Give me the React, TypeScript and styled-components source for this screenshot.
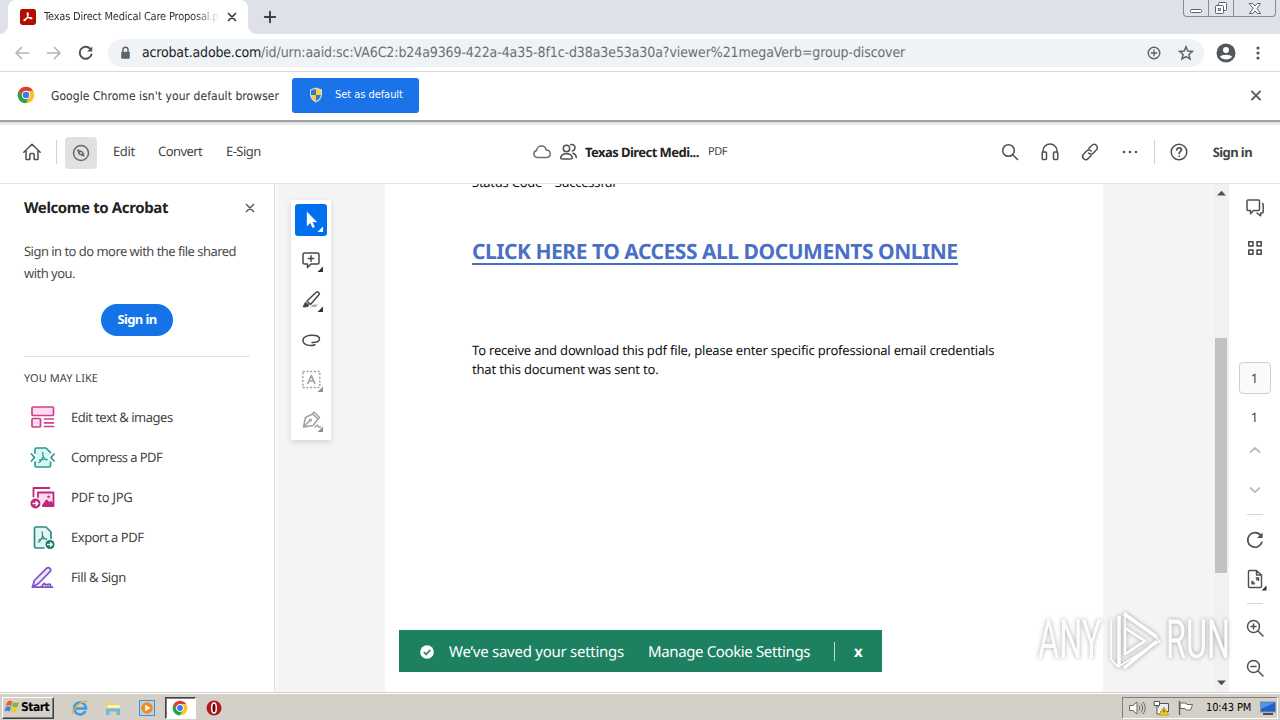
import React from 'react';
import styled, { createGlobalStyle, css } from 'styled-components';

const ui = '"DejaVu Sans Condensed", "DejaVu Sans", sans-serif';
const adobe = '"Noto Sans", "Open Sans", sans-serif';

const Global = createGlobalStyle`
  * { box-sizing: border-box; }
  html, body { margin: 0; overflow: hidden; background: #fff; }
  body { font-family: ${adobe}; color: #2c2c2c; text-rendering: geometricPrecision; }
  svg { display: block; flex: none; }
  p, h1, h2 { margin: 0; }
`;

const Screen = styled.div`
  position: relative;
  width: 1280px;
  height: 720px;
  display: flex;
  flex-direction: column;
  overflow: hidden;
`;

/* ---------- browser ---------- */
const TabStrip = styled.header`
  height: 34px;
  background: #dee1e8;
  display: flex;
  align-items: flex-end;
  padding-left: 8px;
`;
const Tab = styled.div`
  width: 240px;
  height: 34px;
  background: #fff;
  border-radius: 8px 8px 0 0;
  display: flex;
  align-items: center;
  padding: 0 10px 0 12px;
  position: relative;
  &::before, &::after {
    content: '';
    position: absolute;
    bottom: 0;
    width: 8px;
    height: 8px;
  }
  &::before { left: -8px; background: radial-gradient(circle at 0 0, transparent 7.5px, #fff 8px); }
  &::after { right: -8px; background: radial-gradient(circle at 100% 0, transparent 7.5px, #fff 8px); }
`;
const TabTitle = styled.span`
  width: 175px;
  margin: 0 7px 0 8px;
  font: 11px/16px ${ui};
  letter-spacing: -0.2px;
  color: #333;
  white-space: nowrap;
  overflow: hidden;
  mask-image: linear-gradient(90deg, #000 150px, transparent 176px);
`;
const NewTab = styled.div`
  height: 34px;
  display: flex;
  align-items: center;
  margin-left: 15px;
`;
const WindowControls = styled.div`
  margin: 0 4px 17px auto;
  display: flex;
  height: 17px;
  width: 93px;
  border: 1px solid #858b98;
  border-top: 0;
  border-radius: 0 0 4px 4px;
  background: #e1e3e8;
`;
const WindowButton = styled.div<{ $w: number }>`
  width: ${p => p.$w}px;
  display: flex;
  align-items: center;
  justify-content: center;
  & + & { border-left: 1px solid #858b98; }
`;
const Toolbar = styled.div`
  height: 38px;
  display: flex;
  align-items: center;
  padding: 0 13px 0 14px;
  border-bottom: 1px solid #d9d9da;
`;
const NavButton = styled.div`
  width: 32px;
  display: flex;
`;
const AddressBar = styled.div`
  width: 1096px;
  height: 28px;
  margin-left: -2px;
  border-radius: 14px;
  background: #f0f3f5;
  display: flex;
  align-items: center;
  padding: 0 10px 0 12px;
`;
const Url = styled.span`
  margin-left: 11px;
  flex: 1;
  font: 14px/20px ${ui};
  letter-spacing: -0.095px;
  color: #6b6f73;
  white-space: nowrap;
`;
const Host = styled.span`
  color: #202124;
  letter-spacing: -0.17px;
`;
const AddressActions = styled.div`
  display: flex;
  gap: 16px;
`;
const BrowserMenu = styled.div`
  flex: 1;
  display: flex;
  justify-content: flex-end;
  align-items: center;
  gap: 13px;
`;
const InfoBar = styled.div`
  height: 50px;
  display: flex;
  align-items: center;
  padding: 0 18px 2px 17px;
  border-bottom: 2px solid #a0a0a0;
  font: 12px/18px ${ui};
  letter-spacing: 0.06px;
  color: #333;
`;
const InfoText = styled.span`
  width: 241px;
  margin: 1px 0 0 16px;
  white-space: nowrap;
`;
const DefaultButton = styled.button`
  width: 127px;
  height: 35px;
  margin-right: auto;
  border: 0;
  border-radius: 3px;
  background: #1a73e8;
  color: #fff;
  font: 11px/16px ${ui};
  letter-spacing: -0.05px;
  display: flex;
  align-items: center;
  gap: 12px;
  padding: 0 0 0 17px;
  white-space: nowrap;
`;

/* ---------- viewer header ---------- */
const AppHeader = styled.div`
  height: 62px;
  border-bottom: 1px solid #e4e4e4;
  display: grid;
  grid-template-columns: 532px 1fr auto;
  background: linear-gradient(#d8d8d8, #fff 4px);
`;
const HeaderGroup = styled.div<{ $pad?: string }>`
  display: flex;
  align-items: center;
  padding: ${p => p.$pad || '0'};
  height: 59px;
`;
const HeaderActions = styled(HeaderGroup)`
  padding-right: 28px;
  gap: 20px;
`;
const Divider = styled.i<{ $m: string; $h?: number }>`
  width: 1px;
  height: ${p => p.$h || 24}px;
  background: #d0d0d0;
  margin: ${p => p.$m};
`;
const ActiveTool = styled.div`
  width: 32px;
  height: 32px;
  border-radius: 4px;
  background: #e1e1e1;
  display: grid;
  place-items: center;
  margin: 2px 16px 0 0;
`;
const Label = styled.span<{ $s?: number; $ls?: number; $b?: boolean; $w?: number; $up?: number; $c?: string; $ml?: number }>`
  font-size: ${p => p.$s || 13}px;
  line-height: 20px;
  font-weight: ${p => (p.$b ? 700 : 400)};
  letter-spacing: ${p => p.$ls || 0}px;
  color: ${p => p.$c || '#444'};
  white-space: nowrap;
  ${p => p.$w && css`width: ${p.$w}px;`}
  margin-left: ${p => p.$ml || 0}px;
  padding-bottom: ${p => p.$up || 0}px;
`;

/* ---------- body ---------- */
const Body = styled.main`
  height: 508px;
  display: flex;
`;
const SidePanel = styled.aside`
  width: 275px;
  border-right: 1px solid #e2e2e2;
  padding: 0 24px;
  background: #fff;
`;
const PanelHead = styled.div`
  height: 56px;
  padding-bottom: 8px;
  display: flex;
  align-items: center;
  justify-content: space-between;
  margin-right: -5px;
`;
const PanelText = styled.p`
  font-size: 13px;
  line-height: 22px;
  letter-spacing: -0.53px;
  color: #4b4b4b;
  white-space: nowrap;
`;
const SignInPill = styled.button`
  display: block;
  width: 72px;
  height: 32px;
  margin: 20px auto 20px 77px;
  border: 0;
  border-radius: 16px;
  background: #1473e6;
  color: #fff;
  font: 700 13px/20px ${adobe};
  letter-spacing: -0.6px;
  padding: 0 0 2px;
`;
const PanelSection = styled.div`
  border-top: 1px solid #e4e4e4;
  padding-top: 8px;
`;
const ToolList = styled.div`
  padding-top: 8px;
`;
const ToolRow = styled.div`
  height: 40px;
  display: flex;
  align-items: center;
  gap: 16px;
  padding-left: 6px;
`;

const DocArea = styled.section`
  width: 939px;
  background: #f4f4f4;
  border-left: 3px solid #f8f8f8;
  display: flex;
  align-items: flex-start;
  overflow: hidden;
`;
const Palette = styled.div`
  width: 40px;
  height: 240px;
  margin: 16px 54px 0 13px;
  background: #fff;
  box-shadow: 0 2px 6px rgba(0, 0, 0, 0.13);
  display: flex;
  flex-direction: column;
  align-items: center;
  padding: 4px 0;
  gap: 8px;
`;
const PaletteTool = styled.div<{ $on?: boolean }>`
  width: 32px;
  height: 32px;
  border-radius: 3px;
  background: ${p => (p.$on ? '#0170f0' : 'transparent')};
`;
const Paper = styled.article`
  width: 718px;
  height: 540px;
  margin-top: -11px;
  padding-left: 87px;
  background: #fff;
  color: #111;
`;
const StatusLine = styled.p`
  font-size: 13px;
  line-height: 18px;
  letter-spacing: -0.25px;
`;
const DocLink = styled.h1`
  margin-top: 47px;
  width: 486px;
  height: 27px;
  font-size: 21px;
  line-height: 28px;
  letter-spacing: -0.47px;
  white-space: nowrap;
  color: #4a70c4;
  border-bottom: 2px solid #4a70c4;
`;
const DocText = styled.p`
  margin-top: 76px;
  font-size: 13px;
  line-height: 19px;
  letter-spacing: -0.19px;
  white-space: nowrap;
`;
const ScrollTrack = styled.div`
  width: 15px;
  background: #f1f1f1;
  display: flex;
  flex-direction: column;
  align-items: center;
  padding: 6px 1px 6px 0;
`;
const Thumb = styled.div`
  width: 12px;
  height: 235px;
  margin: 142px 0 auto;
  background: #c1c1c1;
`;
const Rail = styled.nav`
  width: 51px;
  display: flex;
  flex-direction: column;
  align-items: center;
  background: #fff;
  padding-top: 4px;
`;
const RailItem = styled.div<{ $mb?: number; $h?: number }>`
  height: ${p => p.$h || 40}px;
  margin-bottom: ${p => p.$mb || 0}px;
  display: flex;
  align-items: center;
  justify-content: center;
  font-size: 13px;
  color: #444;
`;
const PageBox = styled.div`
  width: 32px;
  height: 32px;
  border: 1px solid #cfcfcf;
  border-radius: 4px;
  background: #fafafa;
  display: grid;
  place-items: center;
  font-size: 13px;
  color: #444;
  margin-bottom: 9px;
`;
const RailRule = styled.i`
  width: 16px;
  height: 1px;
  background: #d5d5d5;
`;

/* ---------- overlays ---------- */
const Toast = styled.div`
  position: absolute;
  left: 399px;
  top: 630px;
  width: 483px;
  height: 42px;
  background: #1c8061;
  display: flex;
  align-items: center;
  padding: 2px 0 0 21px;
`;
const Watermark = styled.div`
  position: absolute;
  left: 1038px;
  top: 608px;
  width: 194px;
  height: 66px;
  display: flex;
  align-items: center;
  justify-content: space-between;
  color: rgba(255, 255, 255, 0.95);
  filter: drop-shadow(0 0 2px rgba(0, 0, 0, 0.36));
`;
const MarkWord = styled.span`
  width: 66px;
  font: 400 54px/66px Roboto, sans-serif;
  white-space: nowrap;
  display: block;
  span { display: inline-block; transform: scaleX(0.6); transform-origin: 0 50%; }
`;

/* ---------- taskbar ---------- */
const Taskbar = styled.footer`
  height: 28px;
  background: #d4d0c8;
  border-top: 1px solid #d4d0c8;
  box-shadow: inset 0 1px 0 #fff;
  display: flex;
  align-items: center;
  padding: 2px 2px 0;
`;
const StartButton = styled.div`
  width: 52px;
  height: 22px;
  border: 1px solid;
  border-color: #fff #404040 #404040 #fff;
  box-shadow: inset -1px -1px 0 #808080;
  display: flex;
  align-items: center;
  padding: 0 0 2px 1px;
  font: 700 12px/18px ${ui};
  letter-spacing: -0.5px;
  color: #000;
  margin-right: 9px;
`;
const TaskSlot = styled.div<{ $on?: boolean }>`
  width: ${p => (p.$on ? 31 : 33.6)}px;
  height: 22px;
  display: grid;
  place-items: center;
  ${p => p.$on && css`
    background: #fff;
    border: 1px solid;
    border-color: #404040 #fff #fff #404040;
    box-shadow: inset 1px 1px 0 #808080;
    margin: 0 1px;
  `}
`;
const Tray = styled.div`
  margin-left: auto;
  width: 156px;
  height: 22px;
  border: 1px solid;
  border-color: #808080 #fff #fff #808080;
  display: flex;
  align-items: center;
  padding: 0 0 0 6px;
  font: 11px/16px ${ui};
  color: #000;
  gap: 7px;
`;
const Clock = styled.span`
  margin-left: 5px;
  width: 47px;
  letter-spacing: -0.12px;
  white-space: nowrap;
`;

/* ---------- icons ---------- */
type IconProps = { w?: number; h?: number; box?: string; c?: string; sw?: number; children: React.ReactNode };
const Icon = ({ w = 20, h, box = '0 0 20 20', c = '#505050', sw = 1.5, children }: IconProps) => (
  <svg width={w} height={h || w} viewBox={box} fill="none" stroke={c} strokeWidth={sw} strokeLinecap="round" strokeLinejoin="round">
    {children}
  </svg>
);

const ChromeLogo = ({ size }: { size: number }) => {
  const d = 'M2.47 6.5A11 11 0 0 1 21.53 6.5L12 6.5A5.5 5.5 0 0 0 7.24 14.75Z';
  return (
    <svg width={size} height={size} viewBox="0 0 24 24">
      <path d={d} fill="#e33b2e" />
      <path d={d} fill="#fcc31e" transform="rotate(120 12 12)" />
      <path d={d} fill="#26a148" transform="rotate(240 12 12)" />
      <circle cx="12" cy="12" r="5.6" fill="#fff" />
      <circle cx="12" cy="12" r="4.4" fill="#3b7de9" />
    </svg>
  );
};

const trefoil = 'M9.6 4.6c1.5 0 .8 3-.2 5-.9 1.9-2.7 5-4.1 5-1.600-.4.8-2.900 4.700-3.700 2.500-.5 5-.5 5 .7 0 1.600-3.300.3-4.900-1.800-1-1.500-1.900-5.200-.5-5.200z';
const trefoilOpen = 'M9.500 4.500c1.200 2.500.5 5-1 7.500-.8 1.300-1.700 2.400-2.800 2.700M6.500 12.400c2.500-1.100 5-1.500 8-.9M9.800 7.500c.6 2 2 3.600 3.800 4.600';

const Corner = ({ c = '#333' }) => <path d="M28 22.500v5.500h-5.500z" fill={c} stroke="none" />;

const Tool = ({ on, c = '#484848', children }: { on?: boolean; c?: string; children: React.ReactNode }) => (
  <PaletteTool $on={on}>
    <Icon w={32} box="0 0 32 32" c={c} sw={1.500}>{children}</Icon>
  </PaletteTool>
);

const tools: { label: string; ls: number; icon: React.ReactNode }[] = [
  {
    label: 'Edit text & images', ls: -0.5,
    icon: <Icon w={25} box="0 0 25 25" c="#c9428f" sw={1.700}><rect x="2" y="2" width="21.500" height="8.500" rx="1" fill="#fddcf0" /><rect x="2" y="13.500" width="8.500" height="8.500" rx="1" fill="#fddcf0" /><path d="M14.500 14h9M14.500 17.800h9M14.500 21.500h9" /></Icon>,
  },
  {
    label: 'Compress a PDF', ls: -0.58,
    icon: <Icon w={25} box="0 0 25 25" c="#29998f" sw={1.700}><path d="M5 8V4.500A1.500 1.500 0 0 1 6.500 3H16l4.500 4.500V9l-2.500 3.500 2.500 3.500v4.500A1.500 1.500 0 0 1 19 22H6.500A1.500 1.500 0 0 1 5 20.500V16l2.500-3.500L5 9z" fill="#d6f8f4" stroke="none" /><path d="M5 8V4.500A1.500 1.500 0 0 1 6.500 3H16l4.500 4.500M20.500 17v3.500A1.500 1.500 0 0 1 19 22H6.500A1.500 1.500 0 0 1 5 20.500V17M1.500 9l3 3.500-3 3.500M24 9l-3 3.500 3 3.500" /><path d={trefoilOpen} strokeWidth="1.200" transform="translate(3 3)" /></Icon>,
  },
  {
    label: 'PDF to JPG', ls: -0.28,
    icon: <Icon w={25} box="0 0 25 25" c="#c2277a" sw={1.800}><path d="M3.500 11.500V3H19.500" /><path d="M8 12V7.500h15.500v13.500H13" fill="#fddcf0" /><path d="M13 20.500l3.500-5 3 3 1.500-1.500 2 3v.5z" fill="#c2277a" /><circle cx="18.500" cy="11.800" r="1" fill="#c2277a" strokeWidth=".5" /><circle cx="5.500" cy="18.500" r="5" fill="#c2277a" stroke="none" /><path d="M3 18.500h4.800M6 16.600l2 1.900-2 1.900" stroke="#fff" strokeWidth="1.400" /></Icon>,
  },
  {
    label: 'Export a PDF', ls: -0.47,
    icon: <Icon w={25} box="0 0 25 25" c="#2d8b80" sw={1.700}><path d="M14 23H6a1.500 1.500 0 0 1-1.500-1.500v-18A1.500 1.500 0 0 1 6 2h10l5 5v6.500" fill="#e4f6f4" /><path d={trefoilOpen} strokeWidth="1.200" transform="translate(2.500 2.500)" /><circle cx="20" cy="19.500" r="4.500" fill="#21786f" stroke="none" /><path d="M17.700 19.500h4.300M20.500 17.800l1.700 1.700-1.700 1.700" stroke="#fff" strokeWidth="1.300" /></Icon>,
  },
  {
    label: 'Fill & Sign', ls: -0.42,
    icon: <Icon w={25} box="0 0 25 25" c="#7d55c7" sw={1.700}><path d="M2.500 22l1.800-6.500L16.500 3.300c2.500-2 5.500.8 3.500 3.400L8.500 18.500z" fill="#eee6fb" /><path d="M2.500 22.200h20M12 21c1.500-2.500 3-3.500 3-1.500 0 1.500 2-1.500 3 .5 1-1.500 2.500-1 2.700.8" /></Icon>,
  },
];

export default function App() {
  return (
    <Screen>
      <Global />
      <TabStrip>
        <Tab>
          <svg width="16" height="16" viewBox="0 0 20 20"><rect width="20" height="20" rx="3" fill="#b30b00" /><path d={trefoil} fill="none" stroke="#fff" strokeWidth="1.300" /></svg>
          <TabTitle>Texas Direct Medical Care Proposal.p</TabTitle>
          <Icon w={12} box="0 0 12 12" c="#3c4043" sw={1.700}><path d="M2.500 2.500l7 7M9.500 2.500l-7 7" /></Icon>
        </Tab>
        <NewTab><Icon w={14} box="0 0 14 14" c="#3c4043" sw={1.900}><path d="M7 1.800v10.400M1.800 7h10.400" /></Icon></NewTab>
        <WindowControls>
          <WindowButton $w={24}><Icon w={14} box="0 0 14 14" c="#596070" sw={1}><rect x="1.500" y="8.500" width="11" height="3" rx="1" fill="#fff" /></Icon></WindowButton>
          <WindowButton $w={25}><Icon w={14} box="0 0 14 14" c="#596070" sw={1}><rect x="4.500" y="1.500" width="8" height="8" rx="1" fill="#fff" /><rect x="1.500" y="4.500" width="8" height="8" rx="1" fill="#fff" /><rect x="4.500" y="7.500" width="2" height="2" /></Icon></WindowButton>
          <WindowButton $w={42}><Icon w={14} box="0 0 14 14" c="#596070" sw={1}><path d="M1.500 2.500h3.200L7 5 9.300 2.500h3.200L9 7.500l3.500 5H9.300L7 9.800l-2.300 2.700H1.500L5 7.500z" fill="#fff" /></Icon></WindowButton>
        </WindowControls>
      </TabStrip>
      <Toolbar>
        <NavButton><Icon w={16} box="0 0 16 16" c="#b5b6b8" sw={1.700}><path d="M14.500 8H2M7.500 2.500L2 8l5.500 5.500" /></Icon></NavButton>
        <NavButton><Icon w={16} box="0 0 16 16" c="#b5b6b8" sw={1.700}><path d="M1.500 8H14M8.500 2.500L14 8l-5.500 5.500" /></Icon></NavButton>
        <NavButton><Icon w={16} box="0 0 16 16" c="#505357" sw={2}><path d="M13.500 9.500a6 6 0 1 1-1.200-5.700" /><path d="M14.200 1.500v5H9.200z" fill="#505357" stroke="none" /></Icon></NavButton>
        <AddressBar>
          <Icon w={11} h={14} box="0 0 11 14" c="#5f6368" sw={1.500}><path d="M3 6V3.800a2.500 2.500 0 0 1 5 0V6" /><rect x="1.200" y="5.800" width="8.600" height="7" rx=".8" fill="#5f6368" stroke="none" /></Icon>
          <Url><Host>acrobat.adobe.com</Host>/id/urn:aaid:sc:VA6C2:b24a9369-422a-4a35-8f1c-d38a3e53a30a?viewer%21megaVerb=group-discover</Url>
          <AddressActions>
            <Icon w={16} box="0 0 16 16" c="#5f6368" sw={1.400}><circle cx="8" cy="8" r="5.800" /><path d="M8 5.200v5.600M5.200 8h5.600" /></Icon>
            <Icon w={16} box="0 0 16 16" c="#5f6368" sw={1.500}><path d="M8 1.800l1.800 4.200 4.600.4-3.500 3 1.100 4.500L8 11.500l-4 2.400 1.100-4.500-3.500-3 4.600-.4z" strokeLinejoin="miter" /></Icon>
          </AddressActions>
        </AddressBar>
        <BrowserMenu>
          <svg width="20" height="20" viewBox="0 0 20 20"><circle cx="10" cy="10" r="9.500" fill="#54585d" /><circle cx="10" cy="7" r="3" fill="#fff" /><path d="M4 13.800c1-2.800 11-2.800 12 0-2.500 3.600-9.500 3.600-12 0z" fill="#fff" /></svg>
          <svg width="18" height="16" viewBox="0 0 18 16" fill="#54585d"><circle cx="9" cy="3" r="1.600" /><circle cx="9" cy="8" r="1.600" /><circle cx="9" cy="13" r="1.600" /></svg>
        </BrowserMenu>
      </Toolbar>
      <InfoBar>
        <ChromeLogo size={18} />
        <InfoText>Google Chrome isn't your default browser</InfoText>
        <DefaultButton>
          <svg width="14" height="16" viewBox="0 0 14 16"><path d="M7 .5l6 2v4.500c0 4-2.500 7-6 8.500C3.500 14 1 11 1 7V2.500z" fill="#d9dde2" /><path d="M7 1.900V8H2V3.300z" fill="#2f77d0" /><path d="M7 1.900L12 3.300V8H7z" fill="#f9d32b" /><path d="M2.200 8H7v6C4.500 12.800 2.700 11 2.200 8z" fill="#f9d32b" /><path d="M11.800 8H7v6c2.500-1.200 4.300-3 4.800-6z" fill="#2f77d0" /></svg>
          Set as default
        </DefaultButton>
        <Icon w={12} box="0 0 12 12" c="#5f6368" sw={1.900}><path d="M2 2.500l8 8M10 2.500l-8 8" /></Icon>
      </InfoBar>

      <AppHeader>
        <HeaderGroup $pad="0 0 0 22px">
          <Icon><path d="M1.800 10.200L10 2.200l8.200 8M4 8.800V17.500h3.800v-5a1 1 0 0 1 1-1h2.400a1 1 0 0 1 1 1v5H16V8.800" /></Icon>
          <Divider $m="0 8px 0 14px" />
          <ActiveTool><Icon c="#6a6a6a"><circle cx="10" cy="10" r="7.500" /><path d="M6.800 6.800l4.800 2 1.600 4.400-4.800-1.800z" fill="#6a6a6a" strokeWidth="1" /><circle cx="10" cy="10" r="1" fill="#e1e1e1" stroke="none" /></Icon></ActiveTool>
          <Label $ls={-0.4} $w={45} $up={2}>Edit</Label>
          <Label $ls={-0.58} $w={68} $up={2}>Convert</Label>
          <Label $ls={-0.52} $up={2}>E-Sign</Label>
        </HeaderGroup>
        <HeaderGroup>
          <Icon c="#6e6e6e"><path d="M5.200 15.500a3.500 3.500 0 0 1-.6-6.900C4.600 5.800 6.800 4 9.500 4c2.500 0 4.300 1.700 4.700 4 2.400 0 4 1.600 4 3.800 0 2.100-1.600 3.700-3.700 3.700z" /></Icon>
          <HeaderGroup $pad="0 6px">
            <Icon><circle cx="8.500" cy="6.500" r="3.200" /><path d="M2.700 16.500c0-3.500 2.500-4.800 5.800-4.800s5.800 1.300 5.800 4.800c0 .8-11.600.8-11.600 0zM12.700 2.600c2.500-.5 4.300 1 4.300 3 0 1.800-1.200 3-2.700 3.300M15 11.200c2 .5 3.200 2 3.300 4.300" /></Icon>
          </HeaderGroup>
          <Label $b $ls={-0.55} $w={123} $c="#222" $ml={1}>Texas Direct Medi...</Label>
          <Label $s={11} $ls={-0.5}>PDF</Label>
        </HeaderGroup>
        <HeaderActions>
          <Icon><circle cx="8.500" cy="8.500" r="5.800" /><path d="M12.800 12.800l4.700 4.700" /></Icon>
          <Icon><path d="M3 10.500V9a7 7 0 0 1 14 0v1.500" /><rect x="2.200" y="10" width="4.300" height="7.500" rx="1" /><rect x="13.500" y="10" width="4.300" height="7.500" rx="1" /></Icon>
          <Icon><path d="M8.800 6.500l3-3a3 3 0 0 1 4.700 4.300l-3.300 3.400a3 3 0 0 1-4.500-.2" /><path d="M11.200 13.500l-3 3a3 3 0 0 1-4.700-4.300l3.300-3.400a3 3 0 0 1 4.500.2" /></Icon>
          <svg width="20" height="20" viewBox="0 0 20 20" fill="#505050"><circle cx="4" cy="10" r="1.300" /><circle cx="10" cy="10" r="1.300" /><circle cx="16" cy="10" r="1.300" /></svg>
          <Divider $m="0 -6px" />
          <Icon><circle cx="10" cy="10" r="7.800" /><path d="M7.800 8c0-3 4.600-2.700 4.600-.2 0 1.700-2.200 1.800-2.200 3.600M10.200 14v.1" strokeWidth="1.700" /></Icon>
          <Label $b $ls={-0.6} $ml={4}>Sign in</Label>
        </HeaderActions>
      </AppHeader>

      <Body>
        <SidePanel>
          <PanelHead>
            <Label $b $s={15} $ls={-0.38} $c="#222">Welcome to Acrobat</Label>
            <Icon w={10} box="0 0 10 10" c="#5c5c5c" sw={1.500}><path d="M1.500 1.500l7 7M8.500 1.500l-7 7" /></Icon>
          </PanelHead>
          <PanelText>Sign in to do more with the file shared<br />with you.</PanelText>
          <SignInPill>Sign in</SignInPill>
          <PanelSection>
            <Label $s={11} $ls={0.05}>YOU MAY LIKE</Label>
            <ToolList>
              {tools.map(t => (
                <ToolRow key={t.label}>{t.icon}<Label $ls={t.ls}>{t.label}</Label></ToolRow>
              ))}
            </ToolList>
          </PanelSection>
        </SidePanel>
        <DocArea>
          <Palette>
            <Tool on c="#fff"><path d="M12 8v14l3.400-3.300 2.200 5 2-.9-2.200-4.800h4.300z" fill="#fff" strokeWidth=".3" /><Corner c="#fff" /></Tool>
            <Tool><path d="M9.500 9h13a1.500 1.500 0 0 1 1.500 1.500v8a1.500 1.500 0 0 1-1.500 1.500h-6.500L12.500 23.500V20h-3A1.500 1.500 0 0 1 8 18.500v-8A1.500 1.500 0 0 1 9.500 9zM16 11.800v5.400M13.300 14.500h5.400" /><Corner /></Tool>
            <Tool><path d="M12 17l9.500-9c1.200-.8 3.500 1.300 2.600 2.600L15.500 20.500z" /><path d="M10.800 18.500l3.200 2.700-1.500 1.500-4.300.3 1.200-2.700z" fill="#444" strokeWidth="1" /><path d="M15.500 23h5.500l2-2.500h-5z" fill="#b0b0b0" stroke="none" /><Corner /></Tool>
            <Tool><path d="M20 20.700C14.500 22.800 8 20.500 8 16.500c0-4 5-5.300 9-5.300 4.300 0 7.500 1.300 7.500 3.700 0 2.600-3.500 3.800-7.500 3.500" /></Tool>
            <Tool c="#a0a0a0"><rect x="7.800" y="7.500" width="17" height="16" strokeDasharray="2 1.700" strokeLinecap="butt" /><path d="M12.800 19.500l3.500-8 3.500 8M14 17h4.700" strokeWidth="1.600" /><Corner c="#8f8f8f" /></Tool>
            <Tool c="#a0a0a0"><path d="M8.500 23l2-9.500 7-3.500 5.500 5-5 6.500-9.500 1.500 6.500-6.500M17.500 9.500l1.500-1.500 5.500 5.500-1.700 1.700M20 23l2.500-2 1 2h2" /><circle cx="15.500" cy="16" r=".8" fill="#a0a0a0" /><Corner c="#8f8f8f" /></Tool>
          </Palette>
          <Paper>
            <StatusLine>Status Code – Successful</StatusLine>
            <DocLink>CLICK HERE TO ACCESS ALL DOCUMENTS ONLINE</DocLink>
            <DocText>To receive and download this pdf file, please enter specific professional email credentials<br />that this document was sent to.</DocText>
          </Paper>
        </DocArea>
        <ScrollTrack>
          <svg width="9" height="6" viewBox="0 0 9 6"><path d="M0 5.500L4.500 .8 9 5.500z" fill="#505050" /></svg>
          <Thumb />
          <svg width="9" height="6" viewBox="0 0 9 6"><path d="M0 .5L4.500 5.200 9 .5z" fill="#505050" /></svg>
        </ScrollTrack>
        <Rail>
          <RailItem><Icon><path d="M3 2h10.500a1 1 0 0 1 1 1v8.500a1 1 0 0 1-1 1H8.500L5.500 15.800v-3.300H3a1 1 0 0 1-1-1V3a1 1 0 0 1 1-1zM17.500 5.500c.5.300.7.600.7 1.200v7.300a1 1 0 0 1-1 1h-1.500v2.800L12 15" /></Icon></RailItem>
          <RailItem $mb={94}><Icon c="#444"><rect x="3.800" y="3.800" width="4.200" height="4.200" /><rect x="12" y="3.800" width="4.200" height="4.200" /><rect x="3.800" y="12" width="4.200" height="4.200" /><rect x="12" y="12" width="4.200" height="4.200" /></Icon></RailItem>
          <PageBox>1</PageBox>
          <RailItem $h={27}>1</RailItem>
          <RailItem><Icon w={14} box="0 0 14 14" c="#bcbcbc" sw={1.800}><path d="M2.500 9L7 4.800 11.500 9" /></Icon></RailItem>
          <RailItem $mb={4}><Icon w={14} box="0 0 14 14" c="#bcbcbc" sw={1.800}><path d="M2.500 5L7 9.200 11.500 5" /></Icon></RailItem>
          <RailRule />
          <RailItem $mb={4} $h={50}><Icon sw={1.700}><path d="M17 12a7.300 7.300 0 1 1-1.200-6.500" /><path d="M17.600 2.500v5.500h-5.500z" fill="#505050" stroke="none" /></Icon></RailItem>
          <RailItem $h={20} $mb={14}><Icon w={26} h={24} box="0 0 26 24"><path d="M7.500 3.500h7L19.500 8v11.500a1 1 0 0 1-1 1h-11a1 1 0 0 1-1-1v-15a1 1 0 0 1 1-1zM14.500 3.500V8h5M10 16.800v-2.500M10 16.800h2.500M16.500 11h-2.300M16.500 11v2.500M10.500 16.300l1.200-1.200M16 11.500l-1.200 1.200" strokeWidth="1.400" /><path d="M24.500 18.500V23.500h-5z" fill="#333" stroke="none" /></Icon></RailItem>
          <RailRule />
          <RailItem $mb={-1} $h={48}><Icon><circle cx="8.500" cy="8.500" r="6" /><path d="M13 13l5 5M8.500 6v5M6 8.500h5" /></Icon></RailItem>
          <RailItem $h={34}><Icon><circle cx="8.500" cy="8.500" r="6" /><path d="M13 13l5 5M6 8.500h5" /></Icon></RailItem>
        </Rail>
      </Body>

      <Taskbar>
        <StartButton>
          <svg width="17" height="16" viewBox="0 0 17 16"><path d="M3 3c2-1.500 3.500-1.500 5.500-.2L7.300 7.200C5.500 6 4 6 2 7z" fill="#e8622a" /><path d="M9.300 3.200c2 1 3.700 1 5.700-.2l-1.300 4.500c-1.700 1-3.500 1-5.500 0z" fill="#7ab83a" /><path d="M1.700 8c2-1 3.500-1 5.300.2L5.800 12.500C4 11.500 2.500 11.500.5 12.500z" fill="#3f86d8" /><path d="M7.900 8.600c2 1 3.700 1 5.500 0l-1.300 4.400c-1.800 1-3.500 1-5.400-.1z" fill="#fac332" /></svg>
          Start
        </StartButton>
        <TaskSlot><svg width="18" height="18" viewBox="0 0 18 18" fill="none"><path d="M14.500 12a6 6 0 1 1 .3-4.200l.2 1.700H4" stroke="#3d9de0" strokeWidth="2.600" /><path d="M2 15.500C-.5 12 9 1.500 16.500 2.500" stroke="#e5b53a" strokeWidth="1.300" /></svg></TaskSlot>
        <TaskSlot><svg width="18" height="18" viewBox="0 0 18 18"><path d="M2 3h6l1 1.500h6V14H2z" fill="#f0d06a" /><path d="M3.500 6h12v3h-12z" fill="#fff2b8" /><path d="M2 16V9.500h14V16h-3.500v-3.500h-7V16z" fill="#6db9e6" /></svg></TaskSlot>
        <TaskSlot><svg width="16" height="16" viewBox="0 0 16 16"><rect x=".5" y=".5" width="15" height="15" fill="#b7d3ec" stroke="#4f8cc4" /><circle cx="8" cy="8" r="5.800" fill="#f28b1c" /><path d="M6.200 4.800L11.500 8l-5.300 3.200z" fill="#fff" /></svg></TaskSlot>
        <TaskSlot $on><ChromeLogo size={16} /></TaskSlot>
        <TaskSlot><svg width="16" height="16" viewBox="0 0 16 16"><circle cx="8" cy="8" r="7.500" fill="#b3191c" /><ellipse cx="8" cy="8" rx="2.300" ry="5" fill="#5f0b0d" stroke="#fff" strokeWidth="1.500" /></svg></TaskSlot>
        <Tray>
          <Icon w={17} h={16} box="0 0 17 16" c="#666" sw={1}><path d="M1 5.500h3L8 2v12l-4-3.500H1z" fill="#fff" /><path d="M10 5.500c1.200 1.500 1.200 3.500 0 5M12 3.800c2.200 2.500 2.200 6 0 8.500M14 2.200c3 3.500 3 8 0 11.500" /></Icon>
          <Icon w={17} h={16} box="0 0 17 16" c="#555" sw={1}><rect x="5.500" y="3.500" width="10" height="8" fill="#e8edf5" /><path d="M1.500 1.500h5v4h-5zM4 5.500v8.500h5" fill="#fff" /><path d="M11 7.500l4.500 7.500h-9z" fill="#ffd21f" stroke="#c99a00" /><path d="M11 10v2.200" stroke="#222" /></Icon>
          <Icon w={17} h={16} box="0 0 17 16" c="#666" sw={1}><path d="M2.500 1.500v13" strokeWidth="1.500" /><path d="M3.500 3h5.500l1 1.500h5.500L13.500 10H9l-1-1.500H3.500z" fill="#fff" /></Icon>
          <Clock>10:43 PM</Clock>
          <svg width="16" height="16" viewBox="0 0 16 16"><rect x=".5" y="2" width="15" height="10" fill="#1f62c4" stroke="#7f93b0" /><path d="M1 2.500h14L1 9z" fill="#4d95e6" /><path d="M3 14h10" stroke="#222" strokeWidth="1.500" /></svg>
        </Tray>
      </Taskbar>

      <Toast>
        <svg width="14" height="14" viewBox="0 0 14 14"><circle cx="7" cy="7" r="6.800" fill="#fff" /><path d="M3.800 7.200L6 9.400l4.300-4.600" fill="none" stroke="#3c8a70" strokeWidth="1.800" /></svg>
        <Label $s={15} $ls={-0.26} $w={199} $ml={15} $c="#fff" $up={1}>We’ve saved your settings</Label>
        <Label $s={15} $ls={-0.37} $w={186} $c="#fff" $up={1}>Manage Cookie Settings</Label>
        <Divider $m="0 19px 2px 0" $h={19} />
        <Label $s={15} $b $c="#fff" $up={1}>x</Label>
      </Toast>

      <Watermark>
        <MarkWord><span>ANY</span></MarkWord>
        <svg width="56" height="66" viewBox="0 0 56 66" fill="none" stroke="#fff" strokeLinejoin="round"><path d="M12 8v50M17 6l33 23M17 60l33-27" strokeWidth="3.500" /><path d="M4 11v40l7 8 42-26L18 5v24" strokeWidth="1.500" /><path d="M18 20v26l20-13z" strokeWidth="2.500" /></svg>
        <MarkWord><span>RUN</span></MarkWord>
      </Watermark>
    </Screen>
  );
}
